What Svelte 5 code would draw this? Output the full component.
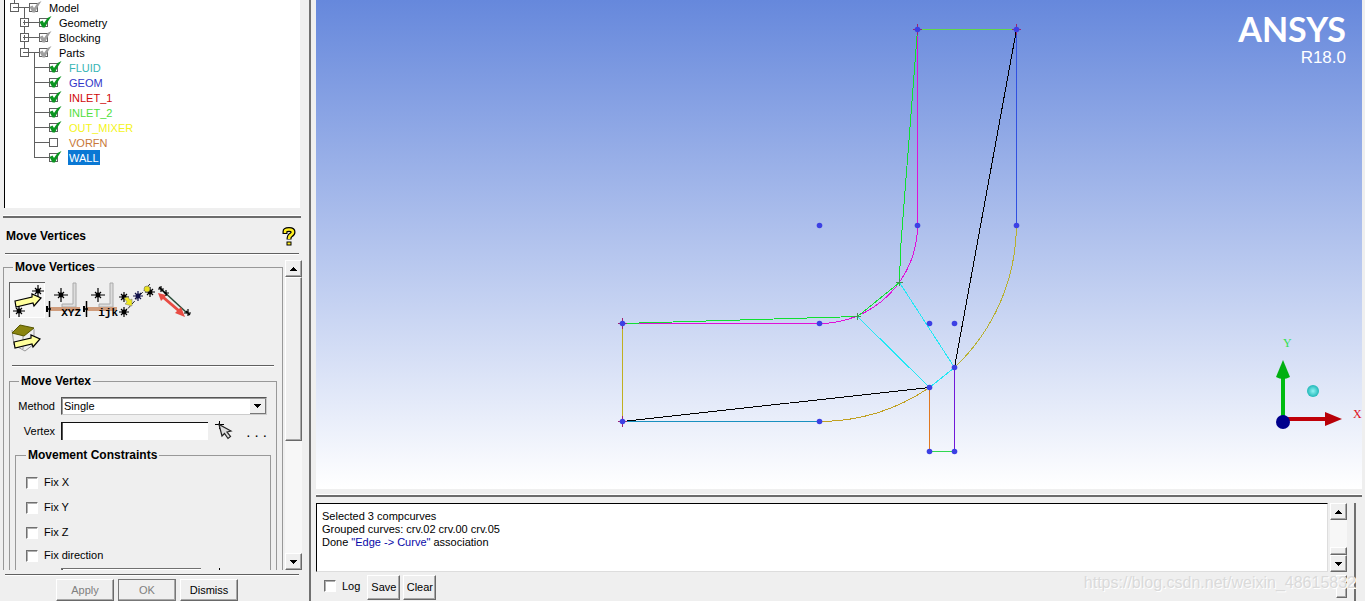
<script>
	// model tree, flattened: one entry per visible row
	let rows = $state([
		{ label: 'Model', depth: 0, open: true, last: true, mark: 'grey', color: '#000' },
		{ label: 'Geometry', depth: 1, open: false, mark: 'green', color: '#000' },
		{ label: 'Blocking', depth: 1, open: false, mark: 'grey', color: '#000' },
		{ label: 'Parts', depth: 1, open: true, last: true, mark: 'grey', color: '#000' },
		{ label: 'FLUID', depth: 2, mark: 'green', color: '#35b5b5' },
		{ label: 'GEOM', depth: 2, mark: 'green', color: '#3236c8' },
		{ label: 'INLET_1', depth: 2, mark: 'green', color: '#d00808' },
		{ label: 'INLET_2', depth: 2, mark: 'green', color: '#4fe03c' },
		{ label: 'OUT_MIXER', depth: 2, mark: 'green', color: '#f4f420' },
		{ label: 'VORFN', depth: 2, mark: '', color: '#c87838' },
		{ label: 'WALL', depth: 2, last: true, mark: 'green', color: '#fff' }
	]);
	let selected = $state('WALL');

	let method = $state('Single');
	let vertex = $state('');
	let log = $state(false);

	const constraints = ['Fix X', 'Fix Y', 'Fix Z', 'Fix direction'];

	const points = [
		[917, 29], [1016, 29], [819, 225], [917, 225], [1016, 225],
		[622, 323], [819, 323], [929, 323], [954, 323], [954, 367],
		[929, 387], [622, 421], [819, 421], [929, 451], [954, 451]
	];
	const corners = [[917, 29], [1016, 29], [622, 323], [622, 421]];

	function toggle(row) {
		row.mark = row.mark ? '' : 'green';
	}
</script>

{#snippet star(x, y, r = 5, color = '#000')}
	<path
		d="M{x - r} {y}H{x + r}M{x} {y - r}V{y + r}M{x - 3} {y - 3}L{x + 3} {y + 3}M{x + 3} {y - 3}L{x - 3} {y + 3}"
		stroke={color}
		stroke-width="1.2"
		fill="none"
	/>
	<circle cx={x} cy={y} r="2.4" fill={color} />
{/snippet}

{#snippet arrow(x, y)}
	<path
		d="M{x} {y + 7}L{x + 17} {y + 3}V{y}L{x + 26} {y + 4}L{x + 19} {y + 12}L{x + 18} {y + 9}L{x + 1} {y + 13}Z"
		fill="#ffff9c"
		stroke="#000"
		stroke-width="1.2"
	/>
{/snippet}

{#snippet triangle(down)}
	<svg width="7" height="4" viewBox="0 0 7 4" shape-rendering="crispEdges">
		<path d={down ? 'M0 0H7L3.5 4Z' : 'M0 4H7L3.5 0Z'} />
	</svg>
{/snippet}

<div class="app">
	<aside class="sidebar">
		<ul class="tree">
			{#each rows as row}
				{@const x = 9.5 + row.depth * 10}
				<li>
					<svg class="lines" width={24 + row.depth * 10} height="15" shape-rendering="crispEdges">
						<path d="M{x} 0V{row.last ? 8 : 15}M{x} 7.5H60" />
						{#if row.open}<path d="M{x + 10} 7.5V15" />{/if}
						{#if row.open !== undefined}
							<rect x={x - 4} y="3.5" width="8" height="8" />
							<path d="M{x - 2} 7.5H{x + 3}" />
							{#if !row.open}<path d="M{x} 5V10" />{/if}
						{/if}
					</svg>
					<label class="node">
						<span class="tick">
							<input type="checkbox" checked={row.mark !== ''} onchange={() => toggle(row)} />
							{#if row.mark}
								<svg width="14" height="13" viewBox="0 0 14 13">
									<path class={row.mark} d="M0.500 6L3.500 4.500L5 7L8.500 2L12.500 0L9 5.500L6 11.500H3.500Z" />
								</svg>
							{/if}
						</span>
						<span class="name" class:selected={selected === row.label} style:color={row.color}>{row.label}</span>
					</label>
				</li>
			{/each}
		</ul>

		<div class="sash"></div>

		<header class="title">
			<h2>Move Vertices</h2>
			<button class="help" aria-label="Help">
				<svg width="14" height="19" viewBox="0 0 14 19">
					<path d="M3 7V4.500Q3 2.500 7 2.500Q11 2.500 11 5Q11 7 9 8Q7 9 7 12.500" fill="none" stroke="#000" stroke-width="5" />
					<path d="M3 6V4.500Q3 2.500 7 2.500Q11 2.500 11 5Q11 7 9 8Q7 9 7 12" fill="none" stroke="#ffee20" stroke-width="2.600" />
					<rect x="5" y="15" width="4" height="3" fill="#ffee20" stroke="#000" />
				</svg>
			</button>
		</header>
		<hr />

		<div class="scroller">
			<div class="pane">
				<fieldset class="outer">
					<legend>Move Vertices</legend>
					<div class="tools">
						<button class="tool pressed" aria-label="Move vertex">
							<svg width="36" height="36" viewBox="0 0 36 36">
								{@render star(29, 9, 6)}
								{@render star(10, 29, 6)}
								{@render arrow(6, 12)}
							</svg>
						</button>
						{#each ['XYZ', 'ijk'] as axes}
							<button class="tool" aria-label="Set location {axes}">
								<svg width="36" height="36" viewBox="0 0 36 36">
									<path d="M27 1H30V25H16V22H27Z" fill="#ddd" stroke="#aaa" />
									<path d="M3 25H34V29H3Z" fill="#cf9c7c" />
									<path d="M0 27H5M3.500 19V35" stroke="#000" stroke-width="1.500" />
									<path d="M1 24V30" stroke="#000" stroke-width="2" />
									{@render star(15, 13, 7)}
									<text x="35" y="34" text-anchor="end">{axes}</text>
								</svg>
							</button>
						{/each}
						<button class="tool" aria-label="Align vertices">
							<svg width="36" height="36" viewBox="0 0 36 36">
								<path d="M4 31L30 2" stroke="#222" stroke-dasharray="4 2" />
								{@render star(4, 15)}
								<path d="M4 16L8 15L10 18L12 17V24L5 22L7 20Z" fill="#eee820" stroke="#777" stroke-width=".5" />
								{@render star(4, 30)}
								{@render star(18, 14, 5, '#101048')}
								{@render star(30, 10)}
								<circle cx="27" cy="7" r="3" fill="#e8e020" stroke="#555" stroke-width=".5" />
							</svg>
						</button>
						<button class="tool" aria-label="Move along line">
							<svg width="36" height="36" viewBox="0 0 36 36">
								<path d="M4 7L30 31" stroke="#264a36" stroke-width="1.500" />
								<path d="M1 11L9 13L8 15L22 27L24 25L28 35L18 31L20 29L6 17L4 19Z" fill="#e84c44" />
								<path d="M1 7H7M4 4V10M2 5L10 13M7 11H12M9 8V14M27 31H34M31 27V34M29 29L33 33" stroke="#000" stroke-width="1.200" />
							</svg>
						</button>
					</div>
					<div class="tools">
						<button class="tool" aria-label="Move face vertices">
							<svg width="36" height="36" viewBox="0 0 36 36">
								<path d="M3 9L5 24L16 30L25 23V8M14 12V28" fill="none" stroke="#999" />
								<path d="M3 12L11 4L25 7L15 15Z" fill="#8a8410" stroke="#555500" />
								{@render arrow(5, 14)}
							</svg>
						</button>
					</div>
					<hr />

					<fieldset class="inner">
						<legend>Move Vertex</legend>
						<div class="field">
							<label for="method">Method</label>
							<div class="combo">
								<select id="method" bind:value={method}>
									<option>Single</option>
									<option>Multiple</option>
								</select>
								<span class="drop">{@render triangle(true)}</span>
							</div>
						</div>
						<div class="field">
							<label for="vertex">Vertex</label>
							<input id="vertex" class="entry" type="text" bind:value={vertex} />
							<button class="pick" aria-label="Select vertex">
								<svg width="18" height="20" viewBox="0 0 18 20">
									<path d="M0 3.500H9M4.500 0V8" stroke="#000" />
									<path d="M4 3.500L7 15L9.500 12.500L13 17.500L15.500 15.500L12 11L16 10Z" fill="#ddd" stroke="#222" stroke-width="1.200" />
								</svg>
							</button>
							<button class="dots">. . .</button>
						</div>

						<fieldset class="limits">
							<legend>Movement Constraints</legend>
							{#each constraints as name}
								<label class="check"><input type="checkbox" />{name}</label>
							{/each}
							<div class="vector">
								<input class="entry" type="text" aria-label="Direction" />
								<svg width="9" height="9" viewBox="0 0 9 9"><path d="M0 4H9M4.500 0V8" stroke="#000" /></svg>
							</div>
						</fieldset>
					</fieldset>
				</fieldset>
			</div>
			<div class="scrollbar">
				<button class="raised step" aria-label="Scroll up">{@render triangle(false)}</button>
				<div class="raised thumb"></div>
				<div class="trough"></div>
				<button class="raised step" aria-label="Scroll down">{@render triangle(true)}</button>
			</div>
		</div>
		<hr />
		<footer class="actions">
			<button class="raised" disabled>Apply</button>
			<button class="raised default" disabled>OK</button>
			<button class="raised">Dismiss</button>
		</footer>
	</aside>

	<main class="work">
		<section class="view">
			<svg class="mesh" viewBox="316 0 1046 489" preserveAspectRatio="xMidYMid meet">
				<!-- straight walls -->
				<g fill="none">
					<path d="M917.500 29.500H1016.500" stroke="#62d848" />
					<path d="M917.500 29.500V225.500M819.500 323.500H622.500" stroke="#e010d8" />
					<path d="M1016.500 29.500V225.500" stroke="#3050e0" />
					<path d="M622.500 323.500V421.500" stroke="#c0b020" />
					<path d="M622.500 421.500H819.500" stroke="#1890c0" />
					<path d="M929.500 387.500V451.500" stroke="#e07820" />
					<path d="M954.500 367.500V451.500" stroke="#7018d8" />
					<path d="M929.500 451.500H954.500" stroke="#30d850" />
				</g>
				<!-- bends and block edges -->
				<g fill="none" shape-rendering="crispEdges">
					<path d="M917.500 225.500A98 98 0 0 1 819.500 323.500" stroke="#e010d8" />
					<path d="M1016.500 225.500A197 197 0 0 1 954.500 367.500" stroke="#b8b030" />
					<path d="M819.500 421.500A197 197 0 0 0 929.500 387.500" stroke="#c0a020" />
					<path d="M917.500 29.500L900.500 250L899.500 282.500L857.500 316.500L622.500 323.500" stroke="#10e030" />
					<path d="M857.500 316.500L929.500 387.500L954.500 367.500L899.500 282.500" stroke="#20e8f4" />
					<path d="M1016.500 29.500L954.500 367.500M622.500 421.500L929.500 387.500" stroke="#000" />
				</g>
				{#each corners as [x, y]}
					<path d="M{x - 4} {y + 0.5}H{x + 5}M{x + 0.5} {y - 5}V{y + 6}" stroke="#a02070" />
				{/each}
				<path d="M854 316.500H861M857.500 313V320M896 282.500H903M899.500 279V286" stroke="#409050" />
				{#each points as [x, y]}
					<circle cx={x + 0.5} cy={y + 0.5} r="2.800" fill="#3c40e4" />
				{/each}
			</svg>

			<div class="brand">
				<strong>ANSYS</strong>
				<span>R18.0</span>
			</div>

			<svg class="triad" width="92" height="110" viewBox="0 -10 92 110">
				<defs>
					<radialGradient id="ball"><stop offset="0" stop-color="#90f4f4" /><stop offset="1" stop-color="#20b8b8" /></radialGradient>
				</defs>
				<rect x="11" y="38" width="4" height="42" fill="#00bc10" />
				<path d="M13 21L6 38Q13 42 20 38Z" fill="#00b010" />
				<rect x="14" y="78" width="42" height="4" fill="#c00008" />
				<path d="M55 73L72 80L55 87Z" fill="#b80008" />
				<circle cx="13" cy="83" r="7" fill="#00008c" />
				<circle cx="43" cy="52" r="6" fill="url(#ball)" />
				<text x="13" y="8" fill="#30e050">Y</text>
				<text x="83" y="79" fill="#e01020">X</text>
			</svg>
		</section>

		<div class="sash"></div>

		<div class="bottom">
			<div class="messages">
				<div class="output">
					<div class="text">
						<p>Selected 3 compcurves</p>
						<p>Grouped curves: crv.02 crv.00 crv.05</p>
						<p>Done <span>"Edge -&gt; Curve"</span> association</p>
					</div>
					<div class="scrollbar">
						<button class="raised step" aria-label="Scroll up">{@render triangle(false)}</button>
						<div class="trough"></div>
						<div class="raised small"></div>
						<button class="raised step" aria-label="Scroll down">{@render triangle(true)}</button>
					</div>
				</div>
				<div class="logbar">
					<label class="check"><input type="checkbox" bind:checked={log} />Log</label>
					<button class="raised">Save</button>
					<button class="raised">Clear</button>
					<div class="raised grip"></div>
				</div>
			</div>
		</div>
		<div class="watermark">https://blog.csdn.net/weixin_48615832</div>
	</main>
</div>

<style>
	:global(body) {
		margin: 0;
		background: #efefef;
	}

	.app {
		display: flex;
		height: 100vh;
		overflow: hidden;
		background: #efefef;
		color: #000;
		font: 11px/15px 'Liberation Sans', Arial, sans-serif;
	}

	.app * {
		box-sizing: border-box;
	}

	button, input, select {
		margin: 0;
		padding: 0;
		border: 0;
		border-radius: 0;
		background: none;
		color: inherit;
		font: inherit;
	}

	svg {
		display: block;
	}

	hr {
		height: 2px;
		margin: 0 10px 0 5px;
		border: 0;
		border-top: 1px solid #606060;
		border-bottom: 1px solid #fff;
	}

	.raised {
		border: 1px solid;
		border-color: #fff #696969 #696969 #fff;
		box-shadow: inset -1px -1px #a8a8a8;
		background: #efefef;
	}

	.sash {
		flex: none;
		height: 3px;
		border-top: 1px solid #fff;
		border-bottom: 2px solid #6c6c6c;
	}

	.sidebar {
		display: flex;
		flex: none;
		flex-direction: column;
		width: 311px;
		border-right: 2px solid #707070;
	}

	/* tree */
	.tree {
		flex: none;
		height: 208px;
		margin: 0 9px 7px 4px;
		padding: 0;
		border-left: 1px solid #000;
		background: #fff;
		list-style: none;
	}

	.tree li, .node {
		display: flex;
		height: 15px;
	}

	.lines path, .lines rect {
		fill: #fff;
		stroke: #606060;
	}

	.tick {
		position: relative;
		width: 19px;
		padding-top: 3px;
	}

	.tick input {
		display: block;
		width: 9px;
		height: 9px;
		border: 1px solid #606060;
		background: #fff;
		appearance: none;
	}

	.tick svg {
		position: absolute;
		top: 1px;
		left: 0;
		pointer-events: none;
	}

	.green {
		fill: #0a9420;
	}

	.grey {
		fill: #a0a0a0;
	}

	.name {
		padding: 0 1px;
		line-height: 16px;
	}

	.selected {
		background: #0a78d4;
	}

	.sidebar > .sash {
		margin: 0 8px 0 3px;
	}

	/* panel title */
	.title {
		display: flex;
		flex: none;
		align-items: center;
		justify-content: space-between;
		height: 35px;
		padding: 2px 13px 0 6px;
	}

	h2 {
		margin: 0;
		font-size: 12px;
	}

	.scroller {
		display: flex;
		flex: 1;
		min-height: 0;
		margin-bottom: 4px;
	}

	.pane {
		flex: 1;
		min-width: 0;
		padding: 5px 0 0 3px;
		overflow: hidden;
	}

	fieldset {
		min-width: 0;
		margin: 0;
		border: 1px solid #989898;
	}

	legend {
		padding: 0 2px;
		font-weight: bold;
		font-size: 12px;
	}

	.outer {
		padding: 7px 5px 0;
	}

	.outer > legend {
		margin-left: 4px;
	}

	.outer > hr {
		margin: 8px 3px 7px;
	}

	.tools {
		display: flex;
		gap: 1px;
		margin-bottom: 3px;
	}

	.tool {
		width: 36px;
		height: 36px;
	}

	.tool svg {
		overflow: visible;
	}

	.tool text {
		font: bold 11px 'Liberation Mono', monospace;
	}

	.pressed {
		background: #f6f6f6;
		box-shadow: inset 1px 1px #606060, inset -1px -1px #fff;
	}

	.inner {
		padding: 8px 5px 0;
	}

	.inner > legend {
		margin-left: 4px;
	}

	.field {
		display: flex;
		align-items: center;
		height: 18px;
		margin-bottom: 7px;
		padding-right: 4px;
	}

	.field label {
		width: 40px;
		margin-right: 6px;
		text-align: right;
	}

	.combo {
		position: relative;
		flex: 1;
		height: 18px;
	}

	.combo select {
		width: 100%;
		height: 18px;
		padding-left: 2px;
		border: 1px solid;
		border-color: #555 #ccc #ccc #555;
		background: #fff;
		box-shadow: inset 1px 1px #999;
		appearance: none;
	}

	.drop {
		position: absolute;
		top: 2px;
		right: 1px;
		padding: 5px 4px;
		border-right: 1px solid #777;
		border-bottom: 1px solid #777;
		background: #efefef;
		pointer-events: none;
	}

	.entry {
		width: 147px;
		height: 18px;
		padding: 0 3px;
		border-top: 1px solid #111;
		border-left: 1px solid #111;
		background: #fff;
		box-shadow: inset 1px 0 #555;
	}

	.pick {
		margin-left: 7px;
	}

	.dots {
		margin-left: auto;
		font-size: 15px;
	}

	.limits {
		margin-top: 8px;
		padding: 7px 10px 0;
	}

	.check {
		display: flex;
		align-items: center;
		gap: 6px;
	}

	.limits .check {
		height: 25px;
	}

	.limits .check:nth-of-type(4) {
		height: 21px;
		margin-bottom: 2px;
	}

	.check input {
		width: 12px;
		height: 12px;
		border: 1px solid;
		border-color: #707070 #fff #fff #707070;
		background: #fff;
		box-shadow: inset 1px 1px #b0b0b0;
		appearance: none;
	}

	.check input:checked {
		background: #444;
	}

	.vector {
		display: flex;
		gap: 14px;
		padding-left: 35px;
	}

	.vector .entry {
		width: 140px;
		border-color: #707070;
	}

	/* scrollbars */
	.scrollbar {
		display: flex;
		flex: none;
		flex-direction: column;
		width: 17px;
	}

	.scroller .scrollbar {
		margin: 5px 7px 0 2px;
	}

	.step {
		display: flex;
		flex: none;
		align-items: center;
		justify-content: center;
		height: 17px;
	}

	.thumb {
		flex: 0 0 53%;
	}

	.small {
		height: 8px;
	}

	.trough {
		flex: 1;
		background: #f7f7f7;
	}

	.actions {
		display: flex;
		flex: none;
		gap: 4px;
		height: 25px;
		padding: 3px 0 0 56px;
	}

	.actions button {
		width: 58px;
		height: 22px;
	}

	.actions .default {
		outline: 1px solid #777;
		outline-offset: -1px;
	}

	button:disabled {
		color: #808080;
	}

	/* right side */
	.work {
		position: relative;
		display: flex;
		flex: 1;
		flex-direction: column;
		min-width: 0;
		padding: 0 3px 0 5px;
	}

	.view {
		position: relative;
		flex: 1;
		min-height: 0;
		background: linear-gradient(#6688dc, #fff);
	}

	.mesh {
		width: 100%;
		height: 100%;
	}

	.brand {
		position: absolute;
		top: 10px;
		right: 16px;
		display: flex;
		flex-direction: column;
		align-items: flex-end;
		color: #fff;
	}

	.brand strong {
		font: bold 34px/38px Lato, 'Liberation Sans', sans-serif;
	}

	.brand span {
		font-size: 17px;
		line-height: 20px;
	}

	.triad {
		position: absolute;
		right: 0;
		bottom: 50px;
		overflow: visible;
	}

	.triad text {
		font: 12px 'Liberation Serif', serif;
	}

	.work > .sash {
		margin: 5px 0 6px;
	}

	.bottom {
		flex: none;
		padding-right: 6px;
	}

	.messages {
		padding-right: 7px;
		border-right: 2px solid #707070;
	}

	.output {
		display: flex;
		gap: 2px;
		height: 69px;
	}

	.text {
		flex: 1;
		padding: 6px 5px;
		border: 1px solid;
		border-color: #000 #ddd #ddd #000;
		background: #fff;
		line-height: 13px;
	}

	.text p {
		margin: 0;
	}

	.text span {
		color: #0808a8;
	}

	.logbar {
		display: flex;
		align-items: flex-start;
		gap: 3px;
		height: 29px;
		padding: 3px 0 0 8px;
	}

	.logbar .check {
		height: 22px;
		margin-right: 4px;
	}

	.logbar button {
		width: 33px;
		height: 25px;
	}

	.grip {
		width: 11px;
		height: 23px;
		margin-left: auto;
	}

	.watermark {
		position: absolute;
		right: 9px;
		bottom: 8px;
		color: #dadada;
		font: 16px/20px 'Liberation Sans', Arial, sans-serif;
		text-shadow: 1px 1px #fff;
		pointer-events: none;
	}
</style>
